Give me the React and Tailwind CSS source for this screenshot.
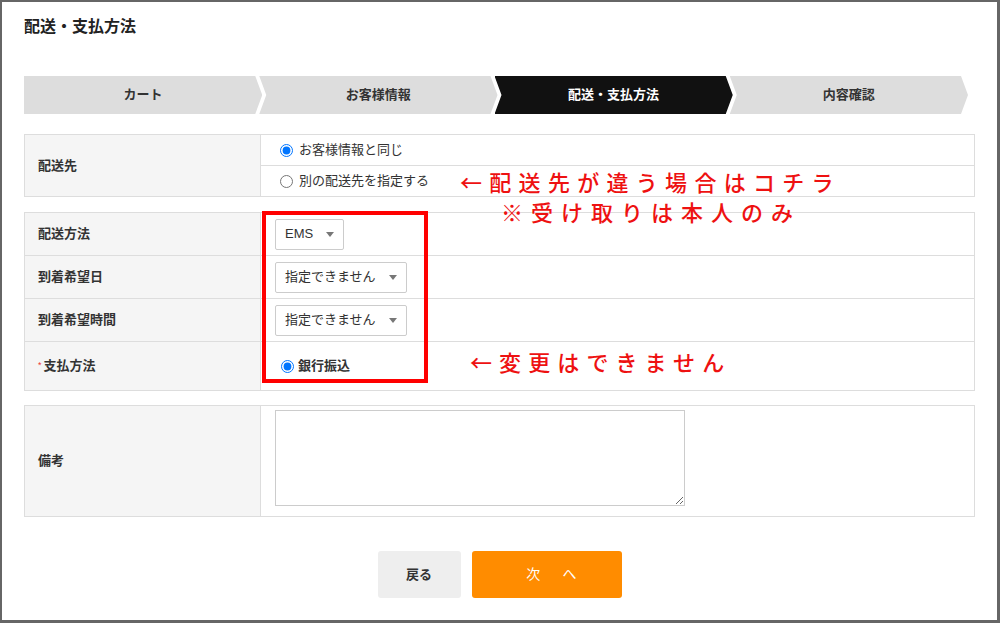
import React from "react";

const steps = [
  { label: "カート", active: false },
  { label: "お客様情報", active: false },
  { label: "配送・支払方法", active: true },
  { label: "内容確認", active: false },
];

const Select = ({ value }) => (
  <div className="flex items-center h-[31px] pl-[9px] pr-[9px] border border-[#cccccc] rounded-[2px] bg-white text-[13px] text-[#333]">
    <span>{value}</span>
    <span className="ml-[13px] w-0 h-0 border-l-[4px] border-r-[4px] border-t-[5px] border-l-transparent border-r-transparent border-t-[#777]" />
  </div>
);

const Row = ({ label, required, children, h, first }) => (
  <div className={"flex " + (first ? "" : "border-t border-[#ddd]")}>
    <div className="w-[236px] shrink-0 bg-[#f5f5f5] border-r border-[#ddd] flex items-center pl-[13px] text-[13px] font-bold text-[#333]">
      {required && <span className="text-[#e33] text-[9px] mr-[2px] font-normal">*</span>}
      {label}
    </div>
    <div className={"flex-1 flex items-center pl-[14px] " + h}>{children}</div>
  </div>
);

export default function App() {
  return (
    <div className="relative w-[1000px] h-[623px] bg-white border-solid border-[#666] border-t-2 border-l-2 border-r-[3px] border-b-[3px] overflow-hidden [font-family:'Liberation_Sans','Noto_Sans_CJK_JP',sans-serif] text-[#333]">
      <div className="pl-[22px] pt-[13px] w-[973px]">
        <h1 className="h-[24px] leading-[24px] text-[16px] font-bold text-[#222]">配送・支払方法</h1>

        {/* steps */}
        <div className="flex mt-[37px] mr-[7px] h-[38px]">
          {steps.map((s, i) => (
            <div
              key={s.label}
              className={
                "flex-1 flex items-center justify-center text-[13px] font-bold " +
                (i > 0 ? "-ml-[3px] " : "") +
                (s.active ? "bg-[#111] text-white " : "bg-[#dddddd] text-[#333] ") +
                (i === 0
                  ? "[clip-path:polygon(0_0,calc(100%_-_7px)_0,100%_50%,calc(100%_-_7px)_100%,0_100%)]"
                  : "[clip-path:polygon(0_0,calc(100%_-_7px)_0,100%_50%,calc(100%_-_7px)_100%,0_100%,7px_50%)]")
              }
            >
              {s.label}
            </div>
          ))}
        </div>

        {/* destination */}
        <div className="mt-[20px] border border-[#ddd] flex">
          <div className="w-[236px] shrink-0 bg-[#f5f5f5] border-r border-[#ddd] flex items-center pl-[13px] text-[13px] font-bold">
            配送先
          </div>
          <div className="flex-1 text-[13px]">
            <label className="h-[30px] flex items-center pl-[19px] gap-[6px]">
              <input type="radio" name="dest" defaultChecked className="m-0 w-[13px] h-[13px]" />
              お客様情報と同じ
            </label>
            <label className="h-[31px] border-t border-[#ddd] flex items-center pl-[19px] gap-[6px]">
              <input type="radio" name="dest" className="m-0 w-[13px] h-[13px]" />
              別の配送先を指定する
            </label>
          </div>
        </div>

        {/* shipping */}
        <div className="mt-[15px] border border-[#ddd]">
          <Row label="配送方法" h="h-[42px]" first>
            <Select value="EMS" />
          </Row>
          <Row label="到着希望日" h="h-[42px]">
            <Select value="指定できません" />
          </Row>
          <Row label="到着希望時間" h="h-[42px]">
            <Select value="指定できません" />
          </Row>
          <Row label="支払方法" required h="h-[48px]">
            <label className="flex items-center gap-[4px] pl-[6px] text-[13px] font-bold">
              <input type="radio" name="pay" defaultChecked className="m-0 w-[13px] h-[13px]" />
              銀行振込
            </label>
          </Row>
        </div>

        {/* note */}
        <div className="mt-[14px] border border-[#ddd] flex h-[112px]">
          <div className="w-[236px] shrink-0 bg-[#f5f5f5] border-r border-[#ddd] flex items-center pl-[13px] text-[13px] font-bold">
            備考
          </div>
          <div className="flex-1 pl-[14px] pt-[4px]">
            <textarea className="block w-[410px] h-[96px] border border-[#ccc] bg-white" />
          </div>
        </div>

        {/* buttons */}
        <div className="mt-[34px] flex justify-center gap-[11px]">
          <button className="w-[83px] h-[47px] rounded-[3px] bg-[#eeeeee] text-[13px] font-bold text-[#333]">戻る</button>
          <button className="w-[150px] h-[47px] rounded-[3px] bg-[#ff8c00] text-[14px] text-white pl-[14px] tracking-[0.3em]">次　へ</button>
        </div>
      </div>

      {/* annotations drawn over the screenshot */}
      <div className="absolute left-[260px] top-[209px] w-[166px] h-[172px] border-4 border-[#ff0000]" />
      <div className="absolute left-[458px] top-[168px] text-[22px] leading-none tracking-[7.3px] text-[#ee1111] font-medium [font-family:'Noto_Sans_CJK_JP',sans-serif] whitespace-nowrap">
        ←配送先が違う場合はコチラ
      </div>
      <div className="absolute left-[499px] top-[198px] text-[22px] leading-none tracking-[8px] text-[#ee1111] font-medium [font-family:'Noto_Sans_CJK_JP',sans-serif] whitespace-nowrap">
        ※受け取りは本人のみ
      </div>
      <div className="absolute left-[468px] top-[348px] text-[22px] leading-none tracking-[7.1px] text-[#ee1111] font-medium [font-family:'Noto_Sans_CJK_JP',sans-serif] whitespace-nowrap">
        ←変更はできません
      </div>
    </div>
  );
}
